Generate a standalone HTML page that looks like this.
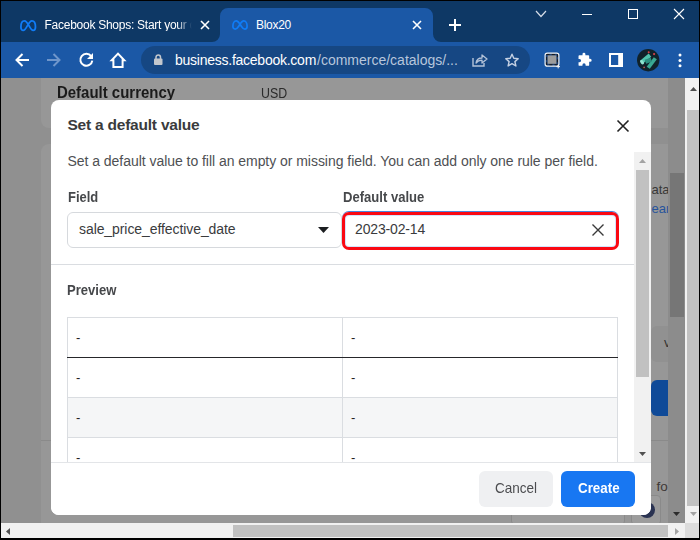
<!DOCTYPE html>
<html><head><meta charset="utf-8">
<style>
*{box-sizing:border-box;margin:0;padding:0}
html,body{width:700px;height:540px;overflow:hidden;background:#000;font-family:"Liberation Sans",sans-serif;}
.abs{position:absolute}
.t{position:absolute;white-space:nowrap;line-height:1}
#root{position:relative;width:700px;height:540px;overflow:hidden;background:#000}
#page{left:1px;top:78px;width:684px;height:445px;background:#909090;overflow:hidden}
#tabbar{left:1px;top:1px;width:698px;height:41px;background:#0e3865}
#toolbar{left:1px;top:42px;width:698px;height:36px;background:#1b58a6}
#url{left:141px;top:46px;width:389px;height:28px;border-radius:14px;background:#164783}
#dialog{left:51px;top:100px;width:600px;height:415px;background:#fff;border-radius:8px;overflow:hidden}
svg{position:absolute;overflow:visible}
</style></head><body>
<div id="root">

  <!-- dimmed page -->
  <div id="page" class="abs">
    <div class="abs" style="left:40px;top:0;width:660px;height:50px;background:#979797;border-radius:0 0 8px 8px"></div>
    <div class="abs" style="left:40px;top:66px;width:660px;height:380px;background:#979797;border-radius:8px 8px 0 0"></div>
    <div class="abs" style="left:40px;top:362px;width:640px;height:1px;background:#8a8a8a"></div>
    <div class="t" id="dc" style="left:56px;top:7px;font-size:16px;transform:scaleX(.935);transform-origin:0 0;font-weight:bold;color:#1a1a1a">Default currency</div>
    <div class="t" id="usd" style="left:259.5px;top:7.6px;font-size:14px;transform:scaleX(.885);transform-origin:0 0;color:#2b2b2b">USD</div>
    <div class="t" style="left:650.5px;top:104.5px;font-size:13px;color:#383838">ata</div>
    <div class="t" style="left:650.5px;top:124px;font-size:13px;color:#27549c">ear</div>
    <div class="abs" style="left:650px;top:248px;width:17px;height:36px;background:#919191;border-radius:6px 0 0 6px"></div>
    <div class="t" style="left:663px;top:258px;font-size:13px;color:#333">v</div>
    <div class="abs" style="left:650px;top:302px;width:17px;height:36px;background:#0f4a98;border-radius:6px 0 0 6px"></div>
    <div class="t" style="left:655.5px;top:401.5px;font-size:13.5px;color:#403a38">fo</div>
    <div class="abs" style="left:510px;top:417px;width:114px;height:30px;border:1px solid #8a8a8a;background:#9c9c9c;border-radius:4px"></div>
    <div class="abs" style="left:630px;top:417px;width:30px;height:30px;border:1px solid #8a8a8a;background:#9c9c9c;border-radius:4px"></div>
    <div class="abs" style="left:638px;top:424px;width:16px;height:16px;border-radius:8px;background:#2a3352"></div>
    <div class="abs" style="left:667px;top:0;width:17px;height:445px;background:#8c8c8c"></div>
    <div class="abs" style="left:669px;top:95px;width:14px;height:144px;background:#767676"></div>
    <svg style="left:672px;top:433.5px" width="7" height="4"><path d="M0 0H7L3.5 4Z" fill="#2b2b2b"/></svg>
  </div>

  <!-- main vertical scrollbar -->
  <div class="abs" style="left:685px;top:78px;width:14px;height:445px;background:#f1f1f1"></div>
  <div class="abs" style="left:687px;top:110px;width:12px;height:396px;background:#c1c1c1"></div>
  <svg style="left:690px;top:86.5px" width="7" height="4"><path d="M0 4H7L3.5 0Z" fill="#505050"/></svg>
  <svg style="left:690px;top:512px" width="7" height="4"><path d="M0 0H7L3.5 4Z" fill="#a3a3a3"/></svg>
  <!-- horizontal scrollbar -->
  <div class="abs" style="left:1px;top:523px;width:684px;height:15px;background:#f1f1f1"></div>
  <div class="abs" style="left:233px;top:525px;width:435px;height:12px;background:#c1c1c1"></div>
  <svg style="left:6px;top:528px" width="4" height="7"><path d="M4 0V7L0 3.5Z" fill="#505050"/></svg>
  <svg style="left:675px;top:528px" width="4" height="7"><path d="M0 0V7L4 3.5Z" fill="#a3a3a3"/></svg>
  <div class="abs" style="left:685px;top:523px;width:14px;height:15px;background:#dcdcdc"></div>

  <!-- chrome -->
  <div id="tabbar" class="abs"></div>
  <div id="toolbar" class="abs"></div>
  <svg style="left:212px;top:8px" width="229" height="34"><path d="M0 34 A8 8 0 0 0 8 26 V8 A8 8 0 0 1 16 0 H213 A8 8 0 0 1 221 8 V26 A8 8 0 0 0 229 34 Z" fill="#1b58a6"/></svg>

  <svg style="left:19.7px;top:19.7px" width="16.4" height="11.3" viewBox="0 0 16 11.3" preserveAspectRatio="none"><path d="M0.9 7C0.9 3.4 2.3 0.9 4.3 0.9C6.4 0.9 7.6 3.4 9.3 6.6C10.5 8.8 11.4 10.4 12.8 10.4C14.3 10.4 15.1 9 15.1 7C15.1 3.4 13.7 0.9 11.7 0.9C9.6 0.9 8.4 3.4 6.7 6.6C5.5 8.8 4.6 10.4 3.2 10.4C1.7 10.4 0.9 9 0.9 7Z" fill="none" stroke="#107cf6" stroke-width="1.75"/></svg>
  <svg style="left:232px;top:19.8px" width="16" height="10" viewBox="0 0 16 10"><path d="M0.9 6.2C0.9 3.2 2.3 0.9 4.2 0.9C6.3 0.9 7.6 3.6 9.3 6.2C10.5 8 11.4 9.1 12.8 9.1C14.3 9.1 15.1 7.9 15.1 6.2C15.1 3.2 13.7 0.9 11.8 0.9C9.7 0.9 8.4 3.6 6.7 6.2C5.5 8 4.6 9.1 3.2 9.1C1.7 9.1 0.9 7.9 0.9 6.2Z" fill="none" stroke="#107cf6" stroke-width="1.75"/></svg>
  <div class="t" id="tab1" style="left:44.5px;top:19px;font-size:12px;letter-spacing:-.26px;color:#fff;width:148px;overflow:hidden;-webkit-mask-image:linear-gradient(90deg,#000 132px,transparent 147px);mask-image:linear-gradient(90deg,#000 132px,transparent 147px)">Facebook Shops: Start your own</div>
  <div class="t" id="tab2t" style="left:256px;top:19px;font-size:12px;letter-spacing:-.3px;color:#fff">Blox20</div>
  <svg style="left:201px;top:21px" width="8" height="8"><path d="M0 0L8 8M8 0L0 8" stroke="#fff" stroke-width="1.6"/></svg>
  <svg style="left:413px;top:21px" width="8" height="8"><path d="M0 0L8 8M8 0L0 8" stroke="#fff" stroke-width="1.6"/></svg>
  <svg style="left:449px;top:19px" width="12" height="12"><path d="M6 0V12M0 6H12" stroke="#fff" stroke-width="2"/></svg>
  <svg style="left:536px;top:11px" width="10" height="6"><path d="M0 0L5 5.5L10 0" stroke="#d5dde8" stroke-width="1.2" fill="none"/></svg>
  <svg style="left:582px;top:14px" width="10" height="1"><path d="M0 .5H10" stroke="#fff" stroke-width="1"/></svg>
  <svg style="left:628px;top:9px" width="10" height="10"><rect x=".5" y=".5" width="9" height="9" stroke="#fff" stroke-width="1" fill="none"/></svg>
  <svg style="left:674px;top:9px" width="10" height="10"><path d="M0 0L10 10M10 0L0 10" stroke="#fff" stroke-width="1.1"/></svg>

  <!-- toolbar icons -->
  <svg style="left:15px;top:53px" width="14" height="14"><path d="M14 7H2M7.5 1L1.5 7L7.5 13" stroke="#fff" stroke-width="2" fill="none"/></svg>
  <svg style="left:47px;top:53px" width="14" height="14"><path d="M0 7H12M6.5 1L12.5 7L6.5 13" stroke="#6f96cb" stroke-width="2" fill="none"/></svg>
  <svg style="left:79px;top:52px" width="15" height="16"><path d="M12.2 4.2A6 6 0 1 0 13.3 8.6" stroke="#fff" stroke-width="2" fill="none"/><path d="M14 1V7H8Z" fill="#fff"/></svg>
  <svg style="left:110px;top:52px" width="16" height="16"><path d="M8 1.6L1.7 8.2H3.4V15H12.6V8.2H14.3Z" stroke="#fff" stroke-width="2" fill="none" stroke-linejoin="miter"/></svg>

  <div id="url" class="abs"></div>
  <svg style="left:153.5px;top:54px" width="9" height="11"><rect x="0" y="4.5" width="8.5" height="6.5" rx="1" fill="#c3c7cd"/><path d="M2 5V3.2A2.25 2.25 0 0 1 6.5 3.2V5" stroke="#c3c7cd" stroke-width="1.5" fill="none"/></svg>
  <div class="t" id="u1" style="left:175px;top:53.2px;font-size:14px;letter-spacing:-.25px;color:#fff">business.facebook.com</div>
  <div class="t" id="u2" style="left:317px;top:53.2px;font-size:14px;color:#b7c6dc">/commerce/catalogs/...</div>
  <svg style="left:472px;top:53px" width="16" height="14"><path d="M1 5V13H12V10" stroke="#b4c3d9" stroke-width="1.4" fill="none"/><path d="M4 10C4.5 6.5 7 5 10 5V2L15 6L10 10V7.2C7.5 7.2 5.5 8 4 10Z" stroke="#b4c3d9" stroke-width="1.3" fill="none" stroke-linejoin="round"/></svg>
  <svg style="left:505px;top:53px" width="14" height="14"><path d="M7 1.2L8.8 5.3L13.2 5.7L9.9 8.6L10.9 13L7 10.7L3.1 13L4.1 8.6L0.8 5.7L5.2 5.3Z" stroke="#c6d2e4" stroke-width="1.4" fill="none" stroke-linejoin="round"/></svg>

  <svg style="left:544px;top:52px" width="16" height="16"><rect x="1.1" y="1.1" width="13.8" height="13" rx="2.2" fill="#1b3f73" stroke="#f2f2f2" stroke-width="1.2"/><rect x="2.6" y="2.5" width="10.8" height="10.2" fill="none" stroke="#1a1a1a" stroke-width="1" stroke-dasharray="3 2.2"/><rect x="3.6" y="3.4" width="8.8" height="8.4" fill="#9c9c9c"/><path d="M12.3 14.6H16M14.2 12.8V16.4" stroke="#f2f2f2" stroke-width="1"/></svg>
  <svg style="left:576.5px;top:52.6px" width="14.6" height="14.2" viewBox="0 0 16 16"><path d="M6 1.2A1.6 1.6 0 0 1 9.2 1.2V2.5H12.5A1 1 0 0 1 13.5 3.5V6.5H14.6A1.7 1.7 0 0 1 14.6 9.9H13.5V13.5A1 1 0 0 1 12.5 14.5H9.5V13.4A1.8 1.8 0 0 0 5.9 13.4V14.5H2.5A1 1 0 0 1 1.5 13.5V10.3H2.6A1.8 1.8 0 0 0 2.6 6.7H1.5V3.5A1 1 0 0 1 2.5 2.5H6Z" fill="#fff"/></svg>
  <svg style="left:609px;top:53px" width="14" height="14"><rect x="1" y="1" width="12" height="12" fill="none" stroke="#fff" stroke-width="2"/><rect x="9.2" y="1" width="3.8" height="12" fill="#fff"/></svg>
  <svg style="left:636.8px;top:49px" width="22.4" height="22.4" viewBox="0 0 22 22"><circle cx="11" cy="11" r="11" fill="#10222a"/><path d="M3 11.5L11.5 4.5L14 7.5L5.5 14.5Z" fill="#4fc3ac"/><path d="M9.5 17.5L16.5 8L19.5 10L12.5 19.5Z" fill="#3aa893"/><path d="M7.5 10.5L13.5 8.5L14.5 12.5L9 14.5Z" fill="#2b8f7f"/><ellipse cx="5" cy="13" rx="1.6" ry="2.4" transform="rotate(-40 5 13)" fill="#8fe3d0"/><circle cx="11.5" cy="3.2" r="1" fill="#d8404a"/><circle cx="16.8" cy="5" r="1.1" fill="#d8404a"/><circle cx="7" cy="18" r=".9" fill="#b55"/></svg>
  <svg style="left:678.4px;top:53px" width="4" height="14"><circle cx="2" cy="2" r="1.5" fill="#fff"/><circle cx="2" cy="7.4" r="1.5" fill="#fff"/><circle cx="2" cy="12.7" r="1.5" fill="#fff"/></svg>

  <!-- dialog -->
  <div id="dialog" class="abs">
    <div class="t" id="ttl" style="left:16.5px;top:17px;font-size:15.5px;letter-spacing:-.22px;font-weight:bold;color:#3a3b3d">Set a default value</div>
    <svg style="left:566px;top:20px" width="12" height="12"><path d="M.5 .5L11.5 11.5M11.5 .5L.5 11.5" stroke="#222" stroke-width="1.6"/></svg>
    <div class="t" id="sub" style="left:16.5px;top:54px;font-size:14px;letter-spacing:-.04px;color:#4e5053">Set a default value to fill an empty or missing field. You can add only one rule per field.</div>
    <div class="t" id="lf" style="left:16.5px;top:90px;font-size:14px;transform:scaleX(.925);transform-origin:0 0;font-weight:bold;color:#46484b">Field</div>
    <div class="t" id="ldv" style="left:292px;top:90px;font-size:14px;transform:scaleX(.933);transform-origin:0 0;font-weight:bold;color:#46484b">Default value</div>
    <div class="abs" style="left:16px;top:112px;width:275px;height:36px;border:1px solid #d6d9dd;border-radius:6px"></div>
    <div class="t" id="sel" style="left:28px;top:122px;font-size:14px;letter-spacing:-.08px;color:#3a3b3d">sale_price_effective_date</div>
    <svg style="left:267px;top:127px" width="11" height="6"><path d="M0 0H11L5.5 6Z" fill="#1c1e21"/></svg>
    <div class="abs" style="left:291px;top:112.4px;width:277px;height:37.5px;border:3px solid #fa0812;border-radius:7px;box-shadow:inset 0 0 0 1px #d3e4fc,0 -1px 0 0 #4a85dc"></div>
    <div class="t" id="val" style="left:304px;top:122px;font-size:14px;letter-spacing:-.15px;color:#3a3b3d">2023-02-14</div>
    <svg style="left:541px;top:124px" width="12" height="12"><path d="M.5 .5L11.5 11.5M11.5 .5L.5 11.5" stroke="#3a3a3a" stroke-width="1.4"/></svg>
    <div class="abs" style="left:0;top:164px;width:583px;height:1px;background:#dadde1"></div>
    <div class="t" id="prev" style="left:16px;top:183px;font-size:14px;transform:scaleX(.934);transform-origin:0 0;font-weight:bold;color:#46484b">Preview</div>

    <!-- table -->
    <div class="abs" style="left:16px;top:217px;width:551px;height:146px;border:1px solid #dadde1;border-bottom:none"></div>
    <div class="abs" style="left:17px;top:298px;width:549px;height:39px;background:#f5f6f7"></div>
    <div class="abs" style="left:291px;top:217px;width:1px;height:146px;background:#dadde1"></div>
    <div class="abs" style="left:16px;top:257px;width:551px;height:1px;background:#26272a"></div>
    <div class="abs" style="left:16px;top:297px;width:551px;height:1px;background:#dadde1"></div>
    <div class="abs" style="left:16px;top:337px;width:551px;height:1px;background:#dadde1"></div>
    <div class="t" style="left:25px;top:231px;font-size:13px;color:#222">-</div>
    <div class="t" style="left:300px;top:231px;font-size:13px;color:#222">-</div>
    <div class="t" style="left:25px;top:271px;font-size:13px;color:#222">-</div>
    <div class="t" style="left:300px;top:271px;font-size:13px;color:#222">-</div>
    <div class="t" style="left:25px;top:311px;font-size:13px;color:#222">-</div>
    <div class="t" style="left:300px;top:311px;font-size:13px;color:#222">-</div>
    <div class="t" style="left:25px;top:351px;font-size:13px;color:#222">-</div>
    <div class="t" style="left:300px;top:351px;font-size:13px;color:#222">-</div>

    <!-- inner scrollbar -->
    <div class="abs" style="left:583.4px;top:52px;width:16.6px;height:310px;background:#f1f1f1"></div>
    <div class="abs" style="left:585.2px;top:70px;width:13px;height:207px;background:#c1c1c1"></div>
    <svg style="left:588px;top:59px" width="7" height="4"><path d="M0 4H7L3.5 0Z" fill="#a3a3a3"/></svg>
    <svg style="left:588px;top:352px" width="7" height="4"><path d="M0 0H7L3.5 4Z" fill="#505050"/></svg>

    <!-- footer -->
    <div class="abs" style="left:0;top:362px;width:600px;height:53px;background:#fff;border-top:1px solid #e3e5e8"></div>
    <div class="abs" style="left:428px;top:371px;width:74px;height:36px;background:#eff0f2;border-radius:6px"></div>
    <div class="t" id="cancel" style="left:444px;top:380.2px;font-size:15px;transform:scaleX(.9);transform-origin:0 0;color:#4b4c4f">Cancel</div>
    <div class="abs" style="left:510px;top:371px;width:74px;height:36px;background:#1877f2;border-radius:6px"></div>
    <div class="t" id="create" style="left:526.5px;top:379.8px;font-size:15.5px;transform:scaleX(.862);transform-origin:0 0;font-weight:bold;color:#fff">Create</div>
  </div>

  <!-- window border -->
  <div class="abs" style="left:0;top:0;width:1px;height:540px;background:#000"></div>
  <div class="abs" style="left:0;top:0;width:700px;height:1px;background:#000"></div>
  <div class="abs" style="left:699px;top:0;width:1px;height:540px;background:#000"></div>
  <div class="abs" style="left:0;top:538px;width:700px;height:2px;background:#000"></div>
</div>
</body></html>
